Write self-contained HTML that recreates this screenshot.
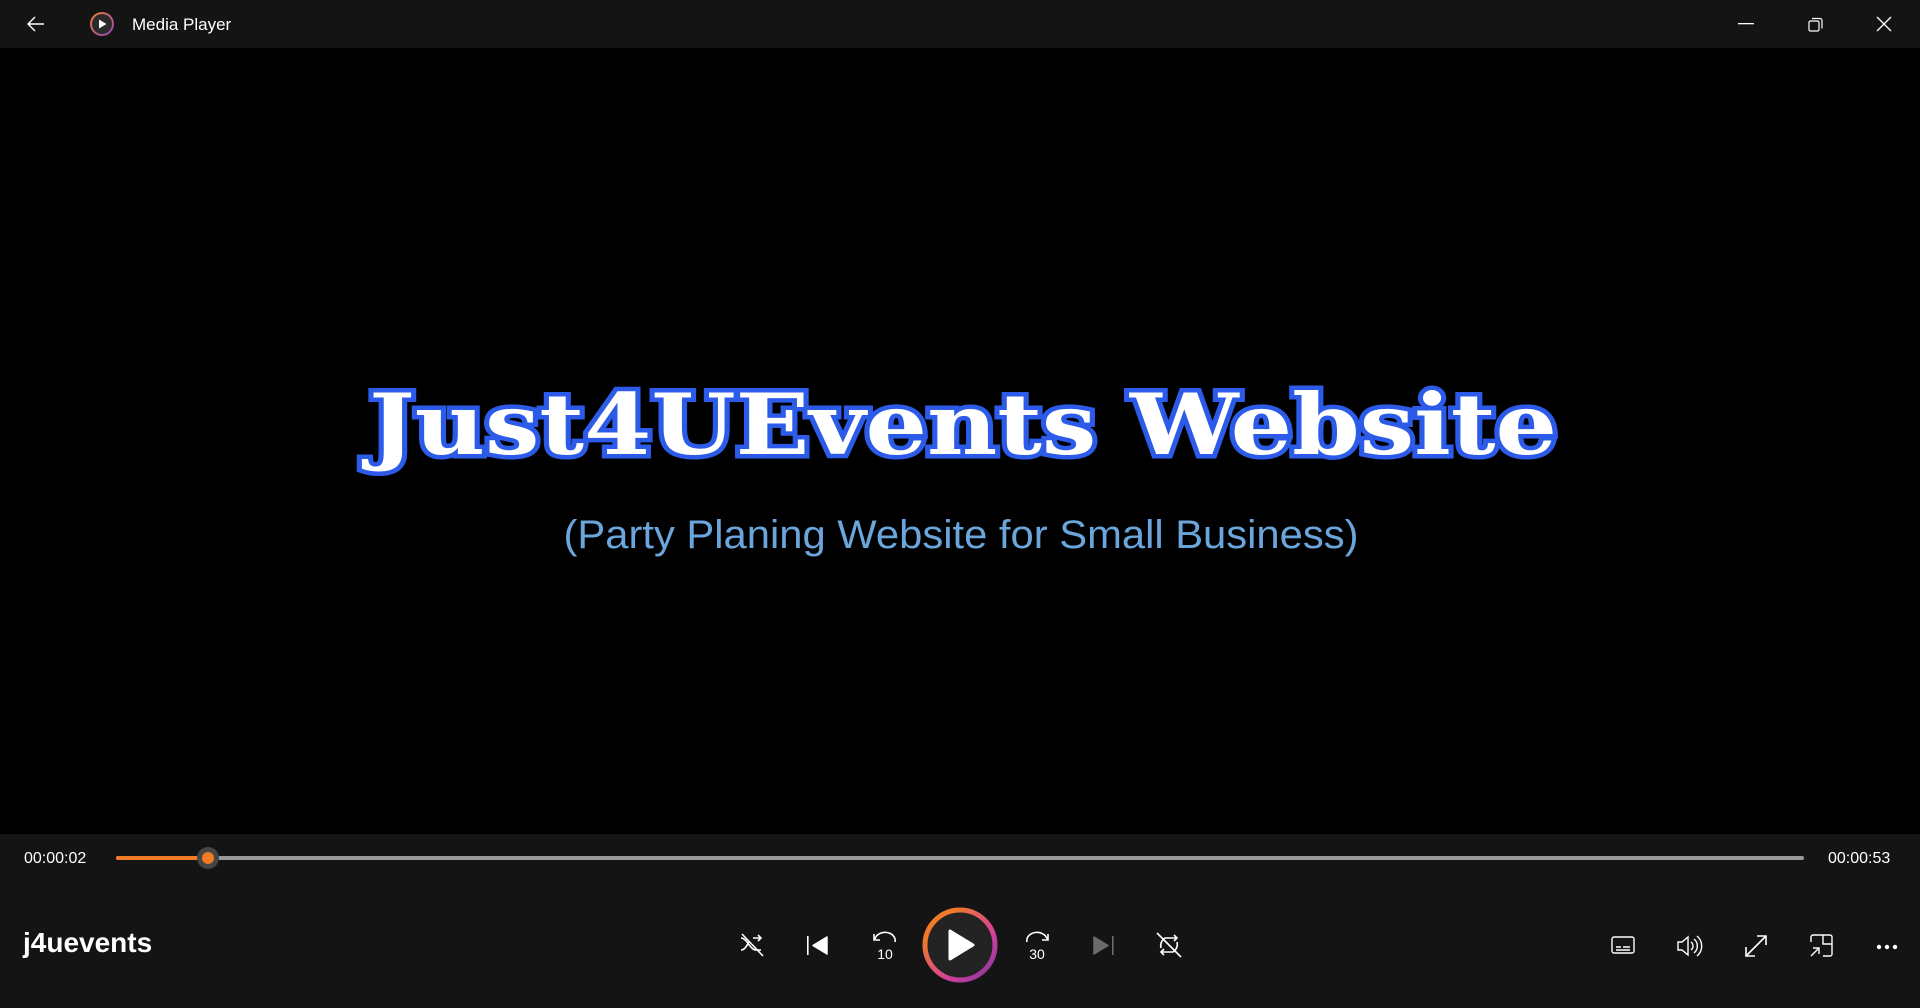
<!DOCTYPE html>
<html><head><meta charset="utf-8"><style>
*{margin:0;padding:0;box-sizing:border-box}
body{width:1920px;height:1008px;background:#000;overflow:hidden;font-family:"Liberation Sans",sans-serif;position:relative;color:#fff}
.top{position:absolute;left:0;top:0;width:1920px;height:48px;background:#141414}
.bot{position:absolute;left:0;top:834px;width:1920px;height:174px;background:#141414}
.abs{position:absolute}
svg{position:absolute;overflow:visible}
</style></head><body>
<div class="top">
<svg style="left:26px;top:14px" width="20" height="20" viewBox="0 0 20 20"><path d="M18 10H3M9 3L2 10l7 7" stroke="#fff" stroke-width="1.4" fill="none"/></svg>
<svg style="left:89px;top:11px" width="26" height="26" viewBox="0 0 26 26"><defs><linearGradient id="lg" x1="0" y1="0" x2="1" y2="1"><stop offset="0" stop-color="#f08030"/><stop offset="1" stop-color="#9040c0"/></linearGradient></defs><circle cx="13" cy="13" r="12" fill="url(#lg)"/><circle cx="13" cy="13" r="10" fill="#2a2a2a"/><path d="M10 8.5v9l7.5-4.5z" fill="#fff"/></svg>
<div class="abs" style="left:132px;top:15px;font-size:17px;color:#fff">Media Player</div>
<svg style="left:1738px;top:23px" width="18" height="2"><rect width="16" height="1.3" fill="#fff"/></svg>
<svg style="left:1808px;top:17px" width="16" height="16" viewBox="0 0 16 16"><rect x="1" y="4" width="10" height="10" rx="1.5" stroke="#fff" stroke-width="1.2" fill="none"/><path d="M4 1.5h8a2 2 0 0 1 2 2v8" stroke="#fff" stroke-width="1.2" fill="none"/></svg>
<svg style="left:1876px;top:16px" width="16" height="16" viewBox="0 0 16 16"><path d="M1 1l14 14M15 1L1 15" stroke="#fff" stroke-width="1.3"/></svg>
</div>

<svg style="left:0;top:360px" width="1920" height="220">
<text x="963" y="94" text-anchor="middle" font-family="DejaVu Serif,serif" font-weight="bold" font-size="84" fill="#fff" stroke="#2b5be8" stroke-width="9" paint-order="stroke" textLength="1188" lengthAdjust="spacingAndGlyphs">Just4UEvents Website</text>
<text x="961" y="188" text-anchor="middle" font-family="Liberation Sans,sans-serif" font-size="40" fill="#6aa6dc" textLength="795" lengthAdjust="spacingAndGlyphs">(Party Planing Website for Small Business)</text>
</svg>

<div class="bot">
<div class="abs" style="left:24px;top:16px;font-size:16px">00:00:02</div>
<div class="abs" style="left:1828px;top:16px;font-size:16px">00:00:53</div>
<div class="abs" style="left:116px;top:22px;width:1688px;height:4px;background:#9a9a9a;border-radius:2px"></div>
<div class="abs" style="left:116px;top:22px;width:92px;height:4px;background:#f37a26;border-radius:2px"></div>
<div class="abs" style="left:197px;top:13px;width:22px;height:22px;border-radius:50%;background:#454545"></div>
<div class="abs" style="left:202px;top:18px;width:12px;height:12px;border-radius:50%;background:#f37a26"></div>
<div class="abs" style="left:23px;top:93px;font-size:28px;font-weight:bold">j4uevents</div>
<svg style="left:740px;top:99px" width="24" height="24" viewBox="0 0 24 24" fill="none" stroke="#fff" stroke-width="1.6"><path d="M1 5c6 0 9 12 15 12h5M1 17c4 0 6-5 8-8M13 5h8M18 2l3 3-3 3M2 1l21 22"/></svg>
<svg style="left:806px;top:100px" width="24" height="24" viewBox="0 0 24 24"><rect x="1" y="2" width="1.6" height="19" fill="#fff"/><path d="M21 3v17L7 11.5z" fill="#fff" stroke="#fff" stroke-linejoin="round" stroke-width="1.5"/></svg>
<svg style="left:871px;top:97px" width="28" height="30" viewBox="0 0 28 30"><path d="M4 8a10 8 0 0 1 20 3" stroke="#fff" stroke-width="1.6" fill="none"/><path d="M3 3v6h6" stroke="#fff" stroke-width="1.6" fill="none"/><text x="14" y="28" font-size="14" fill="#fff" text-anchor="middle" font-family="Liberation Sans">10</text></svg>
<svg style="left:922px;top:73px" width="76" height="76" viewBox="0 0 76 76"><defs><linearGradient id="pg" x1="0" y1="0" x2="1" y2="1"><stop offset="0.2" stop-color="#f07a28"/><stop offset="0.65" stop-color="#d4409a"/><stop offset="1" stop-color="#7a35a0"/></linearGradient></defs><circle cx="38" cy="38" r="35" fill="#232323" stroke="url(#pg)" stroke-width="5"/><path d="M28 24v28l23-14z" fill="#fff" stroke="#fff" stroke-width="3" stroke-linejoin="round"/></svg>
<svg style="left:1023px;top:97px" width="28" height="30" viewBox="0 0 28 30"><path d="M24 8a10 8 0 0 0-20 3" stroke="#fff" stroke-width="1.6" fill="none"/><path d="M25 3v6h-6" stroke="#fff" stroke-width="1.6" fill="none"/><text x="14" y="28" font-size="14" fill="#fff" text-anchor="middle" font-family="Liberation Sans">30</text></svg>
<svg style="left:1091px;top:100px" width="24" height="24" viewBox="0 0 24 24"><path d="M3 3v17l14-8.5z" fill="#6a6a6a" stroke="#6a6a6a" stroke-linejoin="round" stroke-width="1.5"/><rect x="21" y="2" width="1.6" height="19" fill="#6a6a6a"/></svg>
<svg style="left:1156px;top:98px" width="26" height="26" viewBox="0 0 26 26" fill="none" stroke="#fff" stroke-width="1.6"><path d="M5 16A9 9 0 0 1 9 6h12M18 3l3 3-3 3M21 10a9 9 0 0 1-4 10H5M8 23l-3-3 3-3M1 1l24 24"/></svg>
<svg style="left:1611px;top:102px" width="24" height="20" viewBox="0 0 24 20" fill="none" stroke="#fff" stroke-width="1.4"><rect x="1" y="1" width="22" height="16" rx="2"/><path d="M5 11h5M12 11h7M5 14h14"/></svg>
<svg style="left:1677px;top:101px" width="26" height="22" viewBox="0 0 26 22" fill="none" stroke="#fff" stroke-width="1.4"><path d="M1 7h4l6-5v18l-6-5H1z"/><path d="M14 7a5 5 0 0 1 0 8M17 4a9 9 0 0 1 0 14M20 1a13 13 0 0 1 0 20"/></svg>
<svg style="left:1744px;top:100px" width="24" height="24" viewBox="0 0 24 24" fill="none" stroke="#fff" stroke-width="1.6"><path d="M2 22L22 2M13 2h9v9M2 13v9h9"/></svg>
<svg style="left:1810px;top:100px" width="24" height="24" viewBox="0 0 24 24" fill="none" stroke="#fff" stroke-width="1.4"><path d="M1 8V3a2 2 0 0 1 2-2h17a2 2 0 0 1 2 2v17a2 2 0 0 1-2 2h-7M13 1v9h9M1 22l8-8M3 14h6v6"/></svg>
<svg style="left:1876px;top:110px" width="24" height="6"><circle cx="3" cy="3" r="2.2" fill="#fff"/><circle cx="11" cy="3" r="2.2" fill="#fff"/><circle cx="19" cy="3" r="2.2" fill="#fff"/></svg>
</div>
</body></html>
